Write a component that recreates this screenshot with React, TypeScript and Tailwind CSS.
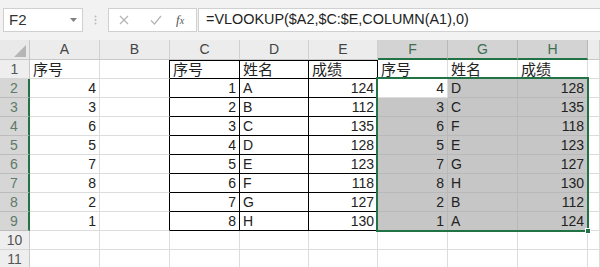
import React from "react";

type CellDef = {
  t?: string;
  align?: "l" | "r";
  cjk?: boolean;
  bg?: string;
  rb?: boolean;
  bb?: boolean;
  tb?: boolean;
};

const A = ["4", "3", "6", "5", "7", "8", "2", "1"];
const C = ["1", "2", "3", "4", "5", "6", "7", "8"];
const D = ["A", "B", "C", "D", "E", "F", "G", "H"];
const E = ["124", "112", "135", "128", "123", "118", "127", "130"];
const F = ["4", "3", "6", "5", "7", "8", "2", "1"];
const G = ["D", "C", "F", "E", "G", "H", "B", "A"];
const H = ["128", "135", "118", "123", "127", "130", "112", "124"];

function buildRow(r: number): CellDef[] {
  if (r === 1) {
    return [
      { t: "序号", align: "l", cjk: true },
      { rb: true },
      { t: "序号", align: "l", cjk: true, rb: true, bb: true, tb: true },
      { t: "姓名", align: "l", cjk: true, rb: true, bb: true, tb: true },
      { t: "成绩", align: "l", cjk: true, rb: true, bb: true, tb: true },
      { t: "序号", align: "l", cjk: true },
      { t: "姓名", align: "l", cjk: true },
      { t: "成绩", align: "l", cjk: true },
      {},
    ];
  }
  if (r >= 2 && r <= 9) {
    const i = r - 2;
    const sel = "#c6c6c6";
    return [
      { t: A[i], align: "r" },
      { rb: true },
      { t: C[i], align: "r", rb: true, bb: true },
      { t: D[i], align: "l", rb: true, bb: true },
      { t: E[i], align: "r", rb: true, bb: true },
      { t: F[i], align: "r", bg: r === 2 ? undefined : sel },
      { t: G[i], align: "l", bg: sel },
      { t: H[i], align: "r", bg: sel },
      {},
    ];
  }
  return [{}, {}, {}, {}, {}, {}, {}, {}, {}];
}

function Cell({ c }: { c: CellDef }) {
  const inSel = !!c.bg;
  const rightColor = c.rb ? "#000000" : inSel ? "#b9b9b9" : "#dcdcdc";
  const bottomColor = c.bb ? "#000000" : inSel ? "#b9b9b9" : "#dcdcdc";
  return (
    <div
      className={`h-[19px] border-r border-b flex items-center overflow-hidden whitespace-nowrap text-[14px] text-[#222] ${
        c.align === "r" ? "justify-end pr-[3px]" : "justify-start pl-[3px]"
      } ${c.tb ? "shadow-[inset_0_1px_0_#000]" : ""}`}
      style={{
        backgroundColor: c.bg ?? "#ffffff",
        borderRightColor: rightColor,
        borderBottomColor: bottomColor,
      }}
    >
      {c.t ? (
        <span className={c.cjk ? "text-[15px] leading-[19px] pt-[1px]" : "leading-[19px] pt-[1px]"}>{c.t}</span>
      ) : null}
    </div>
  );
}

const colLetters = ["A", "B", "C", "D", "E", "F", "G", "H", ""];

export default function App() {
  const rows = Array.from({ length: 11 }, (_, i) => i + 1);
  return (
    <div
      className="w-[600px] h-[267px] overflow-hidden bg-white"
      style={{ fontFamily: '"Liberation Sans", "Noto Sans CJK SC", sans-serif' }}
    >
      {/* Toolbar */}
      <div className="h-[40px] bg-[#f2f2f2] flex items-start pt-[8px] pl-[3px]">
        <div className="w-[80px] h-[24px] bg-white border border-[#d0d0d0] flex items-center justify-between pl-[5px] pr-[5px]">
          <span className="text-[15px] text-[#333]">F2</span>
          <svg width="7" height="4" viewBox="0 0 7 4">
            <path d="M0 0 L7 0 L3.5 4 Z" fill="#808080" />
          </svg>
        </div>
        <div className="w-[25px] h-[24px] flex items-center justify-center">
          <svg width="3" height="10" viewBox="0 0 3 10">
            <circle cx="1.5" cy="1.5" r="1" fill="#bdbdbd" />
            <circle cx="1.5" cy="5" r="1" fill="#bdbdbd" />
            <circle cx="1.5" cy="8.5" r="1" fill="#bdbdbd" />
          </svg>
        </div>
        <div className="w-[89px] h-[24px] bg-white border border-[#d0d0d0] flex items-center pl-[10px]">
          <svg width="10" height="10" viewBox="0 0 10 10" className="mr-[21px]">
            <path d="M1 1 L9 9 M9 1 L1 9" stroke="#b4b4b4" strokeWidth="1.2" />
          </svg>
          <svg width="12" height="10" viewBox="0 0 12 10" className="mr-[14px]">
            <path d="M1 5.5 L4.5 9 L11 1" stroke="#b4b4b4" strokeWidth="1.2" fill="none" />
          </svg>
          <span className="text-[13px] italic text-[#555]" style={{ fontFamily: '"Liberation Serif", serif' }}>
            f<span className="text-[10px]">x</span>
          </span>
        </div>
        <div className="ml-[1px] flex-1 h-[24px] bg-white border border-[#d0d0d0] border-r-0 flex items-center pl-[7px]">
          <span className="text-[14.4px] text-[#222] whitespace-nowrap">=VLOOKUP($A2,$C:$E,COLUMN(A1),0)</span>
        </div>
      </div>

      {/* Grid */}
      <div className="relative grid grid-cols-[30px_70px_70px_70px_69px_69px_70px_70px_70px_1fr]">
        <div className="h-[20px] bg-[#e9e9e9] border-r border-b border-[#c8c8c8] relative">
          <svg width="12" height="12" viewBox="0 0 12 12" className="absolute right-[3px] bottom-[2px]">
            <path d="M12 0 L12 12 L0 12 Z" fill="#b5b5b5" />
          </svg>
        </div>
        {colLetters.map((l, i) => {
          const sel = i >= 5 && i <= 7;
          return (
            <div
              key={"h" + i}
              className={`h-[20px] flex items-center justify-center text-[14px] border-r ${
                sel
                  ? "bg-[#d3d3d3] text-[#3d6e52] border-b-2 border-b-[#217346] border-r-[#b8b8b8]"
                  : "bg-[#ececec] text-[#444] border-b border-b-[#c8c8c8] border-r-[#d0d0d0]"
              }`}
            >
              {l}
            </div>
          );
        })}

        {rows.map((r) => {
          const sel = r >= 2 && r <= 9;
          return (
            <React.Fragment key={r}>
              <div
                className={`h-[19px] flex items-center justify-center text-[14px] border-b ${
                  sel
                    ? "bg-[#d6d6d6] text-[#5e7a6a] border-r-2 border-r-[#217346] border-b-[#bcbcbc]"
                    : "bg-[#eeeeee] text-[#555] border-r border-r-[#c8c8c8] border-b-[#d6d6d6]"
                }`}
              >
                {r}
              </div>
              {buildRow(r).map((c, i) => (
                <Cell key={r + "-" + i} c={c} />
              ))}
            </React.Fragment>
          );
        })}

        <div className="absolute left-[376px] top-[37px] w-[213px] h-[155px] border-2 border-[#217346] pointer-events-none" />
        <div className="absolute left-[585px] top-[188px] w-[6px] h-[6px] bg-[#217346] border border-white pointer-events-none" />
      </div>
    </div>
  );
}
